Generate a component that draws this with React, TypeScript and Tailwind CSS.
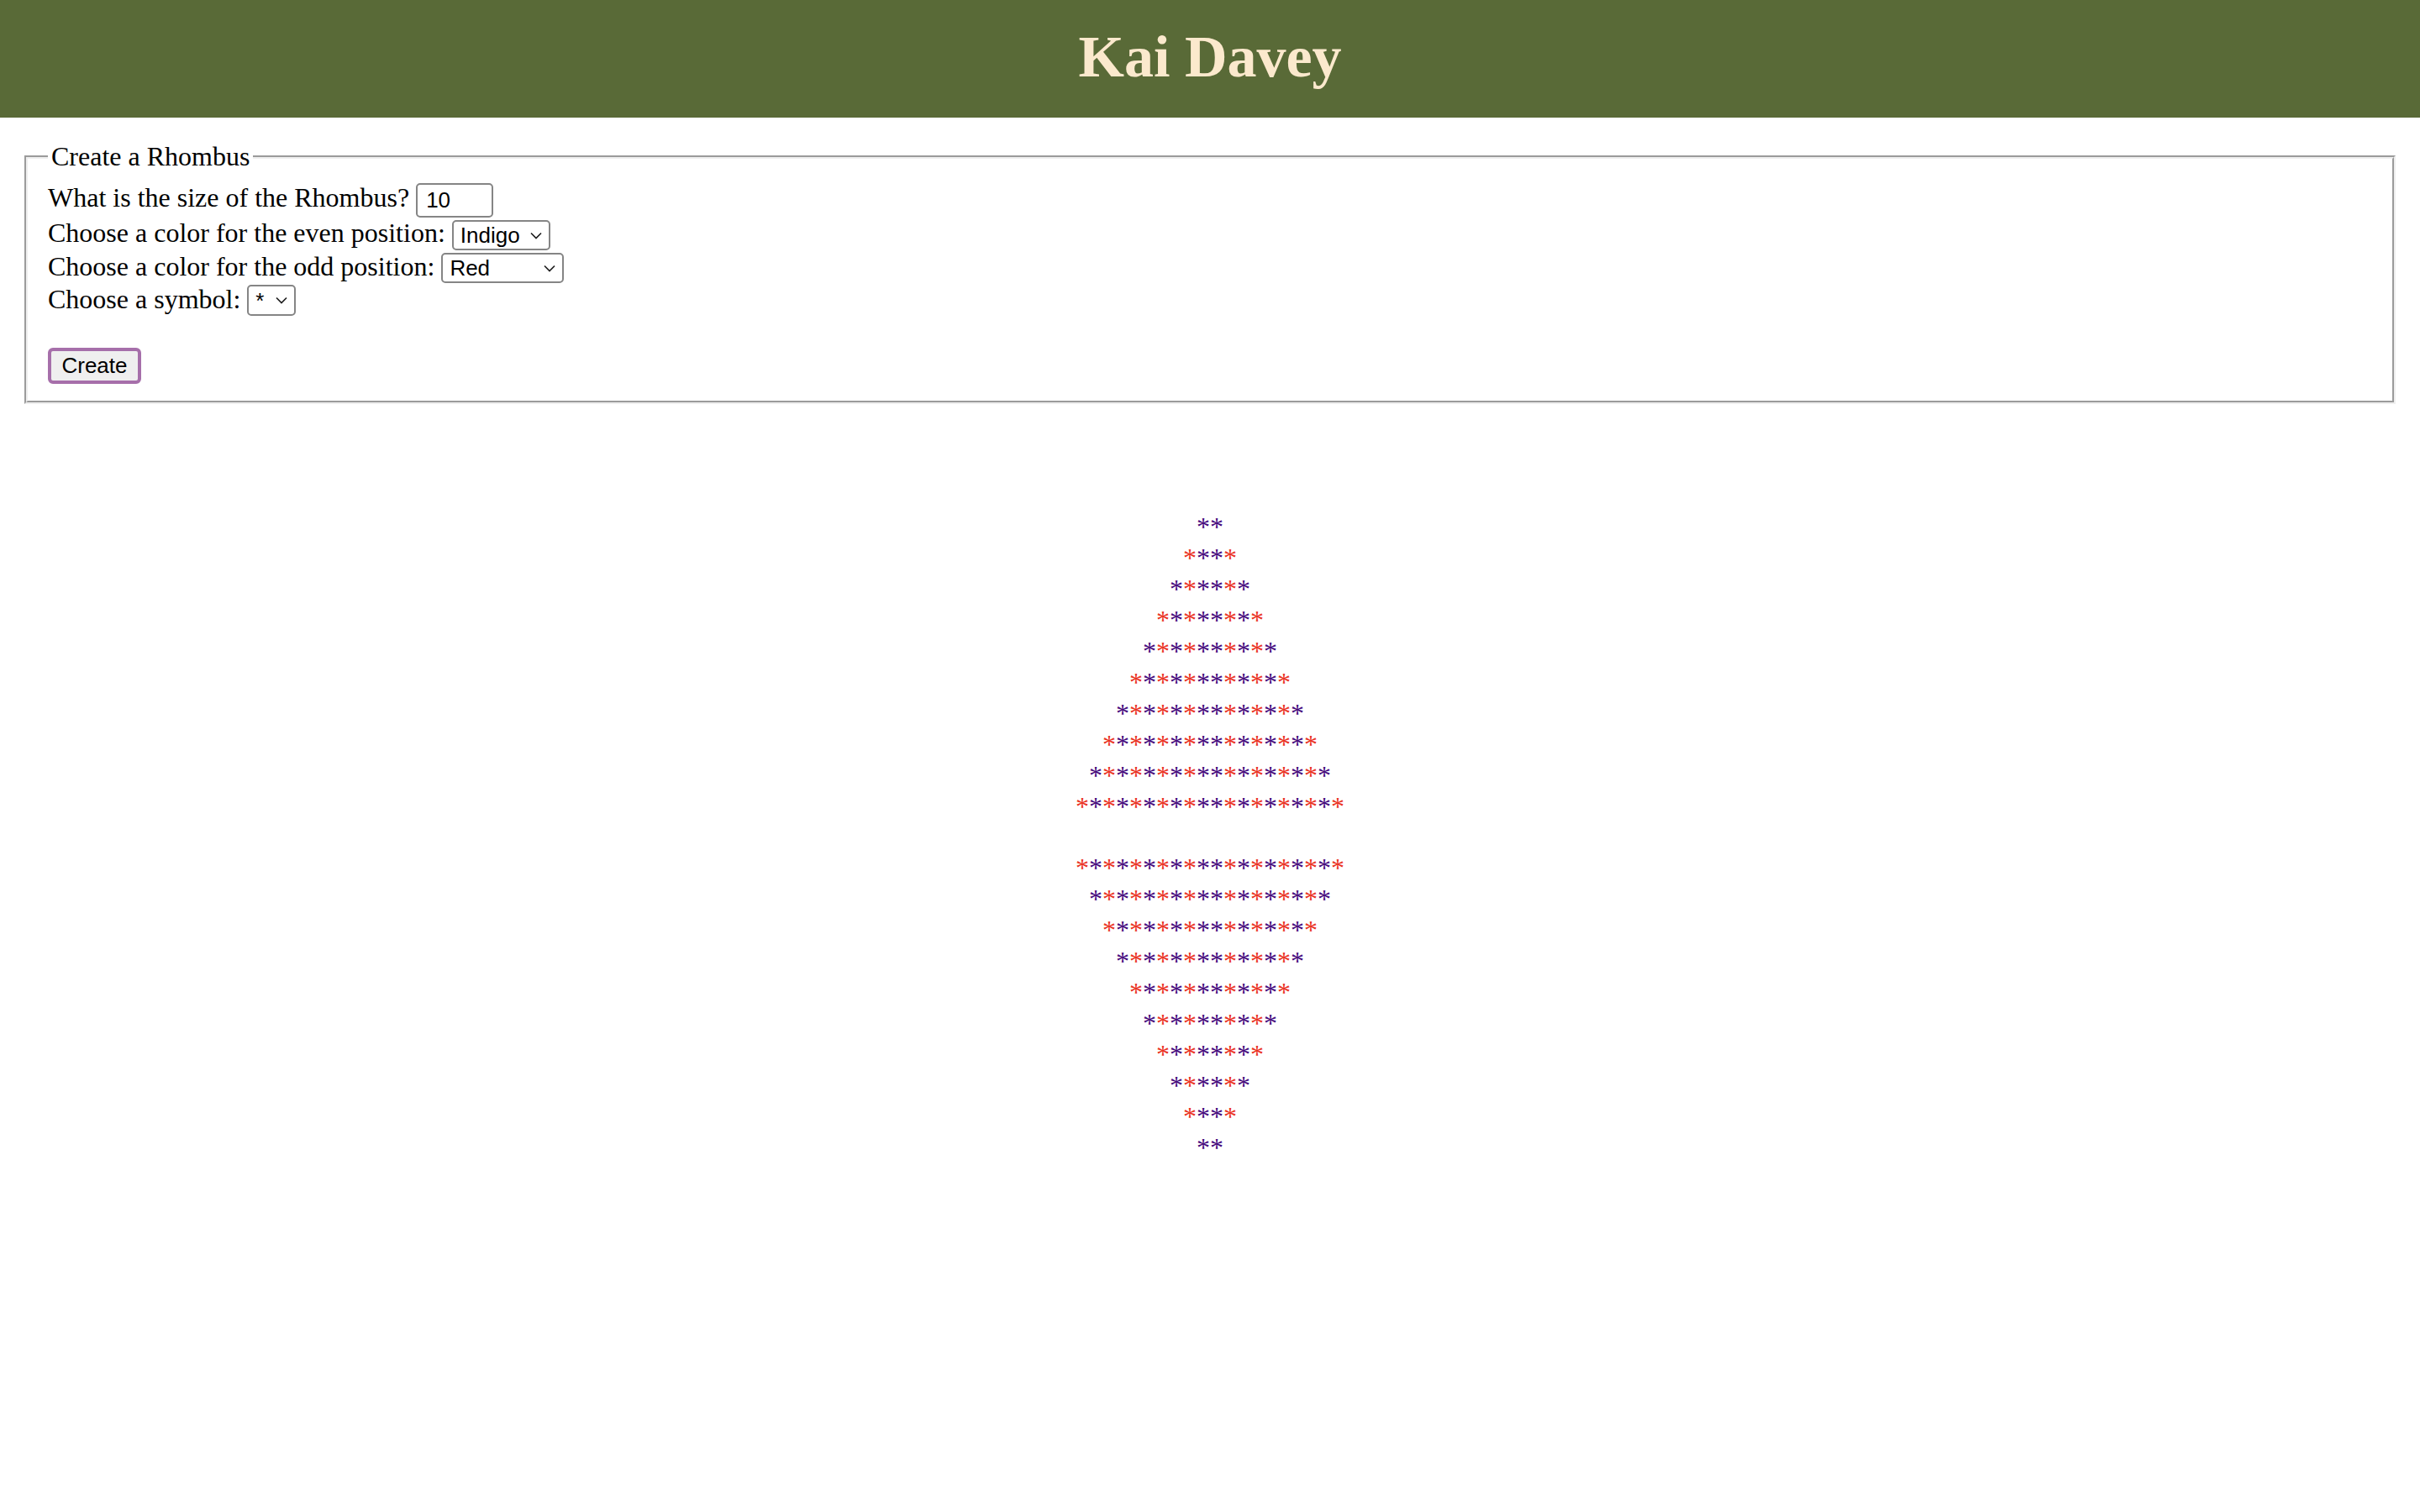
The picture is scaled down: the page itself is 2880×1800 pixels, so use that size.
import React from "react";

const SIZE = 10;

function Chevron() {
  return (
    <svg width="14" height="9" viewBox="0 0 14 9" className="shrink-0">
      <path d="M1 1.5 L7 7.5 L13 1.5" fill="none" stroke="#1f1f1f" strokeWidth="1.7" />
    </svg>
  );
}

function FakeSelect({ value, w, h, mt }: { value: string; w: string; h: string; mt: string }) {
  return (
    <div
      role="combobox"
      aria-expanded="false"
      className={
        w +
        " " +
        h +
        " " +
        mt +
        " ml-[8px] flex items-center justify-between rounded-[5px] border-2 border-[#858585] bg-white pr-[8px] pl-[8px] font-['Liberation_Sans',sans-serif] text-[26px] leading-none text-black"
      }
    >
      <span>{value}</span>
      <Chevron />
    </div>
  );
}

function Star({ indigo }: { indigo: boolean }) {
  return <span className={indigo ? "text-[#45097D]" : "text-[#EA3323]"}>*</span>;
}

function RhombusRow({ k }: { k: number }) {
  const left = Array.from({ length: k }, (_, j) => (k - 1 - j) % 2 === 0);
  const right = Array.from({ length: k }, (_, j) => j % 2 === 0);
  return (
    <div className="h-[37px] leading-[37px] whitespace-pre">
      {left.map((c, i) => (
        <Star key={"l" + i} indigo={c} />
      ))}
      {right.map((c, i) => (
        <Star key={"r" + i} indigo={c} />
      ))}
    </div>
  );
}

export default function App() {
  const top = Array.from({ length: SIZE }, (_, i) => i + 1);
  const bottom = [...top].reverse();
  return (
    <div className="min-h-screen w-full bg-white">
      <header className="flex h-[140px] items-center justify-center bg-[#596A37] pb-[5px]">
        <h1 className="font-['Liberation_Serif',serif] text-[70px] font-bold leading-normal text-[#FBE9CD]">
          Kai Davey
        </h1>
      </header>

      <main className="px-[29px] pt-[28px]">
        <fieldset className="border-4 border-[#efefef] px-[24px] pt-[11px] pb-[20px] font-['Liberation_Serif',serif] text-[32px] leading-[37px] text-black [border-style:groove]">
          <legend className="h-[37px] px-[4px] leading-[37px]">Create a Rhombus</legend>

          <div className="flex h-[43px] items-start">
            <label htmlFor="size" className="mt-[1px] leading-[37px]">
              What is the size of the Rhombus?
            </label>
            <input
              id="size"
              defaultValue="10"
              className="mt-[2px] ml-[8px] h-[41px] w-[92px] rounded-[5px] border-2 border-[#858585] bg-white pl-[10px] font-['Liberation_Sans',sans-serif] text-[26px] text-black outline-none"
            />
          </div>

          <div className="flex h-[39px] items-start">
            <span className="leading-[37px]">Choose a color for the even position:</span>
            <FakeSelect value="Indigo" w="w-[117px]" h="h-[36px]" mt="mt-[3px]" />
          </div>

          <div className="flex h-[39px] items-start">
            <span className="mt-[1px] leading-[37px]">Choose a color for the odd position:</span>
            <FakeSelect value="Red" w="w-[146px]" h="h-[36px]" mt="mt-[3px]" />
          </div>

          <div className="flex h-[39px] items-start">
            <span className="mt-[1px] leading-[37px]">Choose a symbol:</span>
            <FakeSelect value="*" w="w-[58px]" h="h-[37px]" mt="mt-[2px]" />
          </div>

          <div className="h-[38px]" />

          <button
            type="button"
            className="flex h-[43px] w-[111px] items-center justify-center rounded-[6px] border-[4px] border-[#A66FAA] bg-[#efefef] font-['Liberation_Sans',sans-serif] text-[26px] leading-normal text-black"
          >
            Create
          </button>
        </fieldset>
      </main>

      <section className="mt-[128px] text-center font-['Liberation_Serif',serif] text-[32px]">
        {top.map((k) => (
          <RhombusRow key={"t" + k} k={k} />
        ))}
        <div className="h-[36px]" />
        {bottom.map((k) => (
          <RhombusRow key={"b" + k} k={k} />
        ))}
      </section>
    </div>
  );
}
